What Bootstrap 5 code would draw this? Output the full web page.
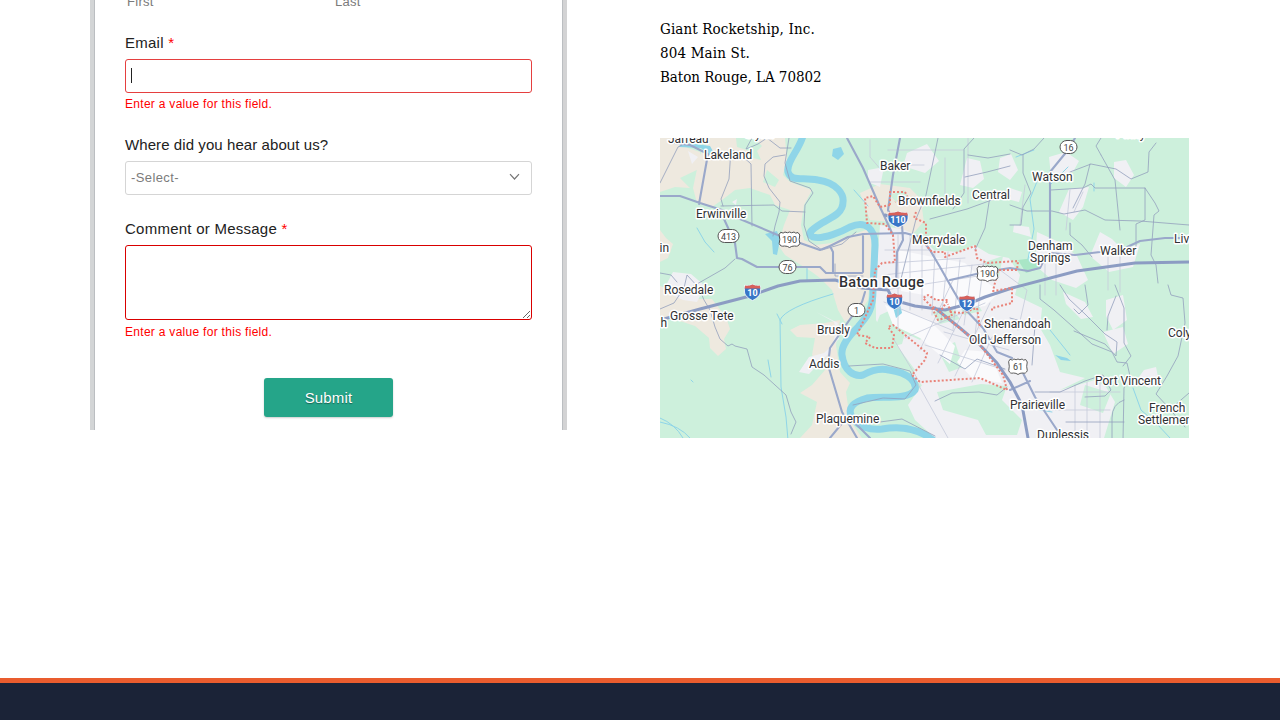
<!DOCTYPE html>
<html lang="en">
<head>
<meta charset="utf-8">
<meta name="viewport" content="width=device-width, initial-scale=1">
<title>Contact Giant Rocketship</title>
<link href="https://cdn.jsdelivr.net/npm/bootstrap@5.3.0/dist/css/bootstrap.min.css" rel="stylesheet">
<style>
body{font-family:"Liberation Sans",Arial,sans-serif;color:#222}
.page-main{height:678px}
.form-frame{width:477px;height:430px;margin-left:90px;padding:0 30px;border:solid #d3d4d6;border-width:0 5px;border-image:linear-gradient(90deg,#d3d5d6 0,#d3d5d6 4px,#bbbec1 4px,#bbbec1 5px,#bbbec1 472px,#bbbec1 473px,#d3d3d4 473px) 0 5}
.name-hints{height:18px;margin-top:-7px;margin-bottom:22px;font-size:13px;line-height:18px;letter-spacing:.3px;color:#7b7b7b}
.name-hints span{flex:0 0 208px;padding-left:2px}
.field-title{display:block;font-size:15px;line-height:20px;letter-spacing:.25px;margin-bottom:6px}
.field-title.long-title{letter-spacing:.08px}
.field-title i{color:#f00;font-style:normal}
.form-frame .form-control,.form-frame .form-select{height:34px;border-radius:3px;font-size:13px;letter-spacing:.4px;padding:0 5px;color:#7b7b7b;box-shadow:none}
.form-frame .form-select{border-color:#d5d5d5;background-image:none;margin-bottom:24px}
.form-frame .email-box{border-color:#e53f3f}
.form-frame textarea.form-control{height:75px;border-color:#d90000}
.caret-bar{width:1px;height:15px;background:#222;left:6px;top:9px}
.select-arrow{right:12px;top:12px}
.error-note{font-size:12px;line-height:18px;letter-spacing:.29px;color:#f00;padding-top:2px;margin-bottom:22px}
.error-note.last-note{padding-top:3px;margin-bottom:37px}
.send-btn{width:129px;height:39px;background:#25a589;color:#fff;border:0;border-radius:3px;font-size:15px;letter-spacing:.15px;padding:2px 0 0;text-shadow:0 1px 1px #0006;box-shadow:0 1px 2px #0003}
.info-col{width:529px;margin-left:93px;padding-top:17px}
.street{font-family:"Roboto Slab","DejaVu Serif Condensed","DejaVu Serif",serif;font-size:15px;line-height:24px;color:#000;margin-bottom:49px;white-space:nowrap}
.street .firm{letter-spacing:.13px}
.street .house{letter-spacing:.15px}
.street .locality{letter-spacing:-.05px}
.site-foot{height:42px;background:#1b2337;border-top:5px solid #e95c2e}
.town{font-family:Roboto,sans-serif;font-size:12px;fill:#303134;stroke:#fff;stroke-width:3px;stroke-linejoin:round;paint-order:stroke}
.road-no{font-family:Roboto,sans-serif;font-size:9px;fill:#444;text-anchor:middle}
.interstate-no{font-family:Roboto,sans-serif;font-size:9px;font-weight:700;fill:#fff;text-anchor:middle}
</style>
</head>
<body class="bg-white overflow-hidden">
<main class="page-main d-flex align-items-start overflow-hidden">
<form class="form-frame flex-shrink-0 overflow-hidden" novalidate>
  <div class="name-hints d-flex"><span>First</span><span>Last</span></div>
  <label class="field-title" for="email">Email <i>*</i></label>
  <div class="position-relative"><input id="email" class="form-control email-box"><span class="caret-bar position-absolute"></span></div>
  <div class="error-note">Enter a value for this field.</div>
  <label class="field-title long-title" for="source">Where did you hear about us?</label>
  <div class="position-relative"><select id="source" class="form-select"><option>-Select-</option></select>
    <svg class="select-arrow position-absolute" width="11" height="8" fill="none" stroke="#777" stroke-width="1.2"><path d="M1 1.2 5.5 6 10 1.2"/></svg></div>
  <label class="field-title" for="comment">Comment or Message <i>*</i></label>
  <textarea id="comment" class="form-control d-block"></textarea>
  <div class="error-note last-note">Enter a value for this field.</div>
  <div class="text-center"><button type="button" class="btn send-btn">Submit</button></div>
</form>
<section class="info-col flex-shrink-0">
  <address class="street"><span class="d-block firm">Giant Rocketship, Inc.</span><span class="d-block house">804 Main St.</span><span class="d-block locality">Baton Rouge, LA 70802</span></address>
  <svg class="d-block" width="529" height="300" viewBox="660 138 529 300" fill="none" stroke-linejoin="round" stroke-linecap="round">
    <defs>
      <g id="shield"><path d="M-7.500-6.500Q-4-5.500 0-7.500Q4-5.500 7.500-6.500Q8.500-3 8 0C7.500 4 4 6.500 0 8.500C-4 6.500-7.500 4-8 0Q-8.500-3-7.500-6.500Z" fill="#3876c7" stroke="#fff" stroke-width=".8"/><path d="M-7.300-6.500Q-4-5.500 0-7.500Q4-5.500 7.300-6.500L7.900-3.500H-7.900Z" fill="#d8605a"/></g>
      <g id="usroute"><path d="M-8.500-7Q-6-5.500-4.500-7.500Q-2-6 0-7.500Q2-6 4.500-7.500Q6-5.500 8.500-7L10.300-4.500Q9 0 10.300 4Q9 7.500 5 6.500Q2 6.500 0 8Q-2 6.500-5 6.500Q-9 7.500-10.300 4Q-9 0-10.300-4.500Z" fill="#fff" stroke="#555" stroke-width="1"/></g>
    </defs>
    <path fill="#cdf0dc" d="M660 138h529v300H660z"/>
    <!-- farmland -->
    <g fill="#eee9df">
      <path d="M660 138L675 138L688 148L700 152L701 168L680 178L690 188L675 187L660 192Z"/>
      <path d="M700 155L710 138L785 138L787 160L783 175L790 182L812 190L804 205L801 225L804 240L815 245L832 243L845 237L872 228L871 265L868 300L860 312L845 322L838 310L832 290L820 278L812 272L785 255L778 245L784 225L790 210L775 205L770 195L750 188L735 190L722 200L712 207L697 203L693 188Z"/>
      <path d="M790 330L800 325L825 323L840 320L836 345L840 372L850 383L846 392L850 420L862 438L800 438L812 425L817 402L800 393L812 385L825 370L812 355L815 338L797 337Z"/>
      <path d="M660 230l6 8 7 6-5 14-8 4zM660 286l14 5 20 8 18 0 14 18 4 12-6 10 2 10-8 7-8-8-1-10-14-12-18-6-17-4z"/>
      <path d="M860 193L880 184L910 188L922 200L925 220L912 235L900 232L890 222L870 220Z"/>
      <path d="M884 233l14-3 8 58-17 5zM935 255l15-2 4 14-14 3zM1020 382l18 5 14 12-18 7z"/>
    </g>
    <path fill="#cdf0dc" d="M736 138h18l8 8-5 5 4 9-8-2-6-8-10-3zM767 170l12 10-4 7-12-5z"/>
    <!-- built-up land -->
    <g fill="#f0f0f4">
      <path d="M880 225L905 230L922 238L934 250L958 252L974 245L989 254L1009 258L1020 275L1015 295L1042 308L1040 328L1050 345L1060 372L1085 378L1060 390L1095 380L1106 387L1115 402L1104 438H935L915 420L908 405L922 385L908 375L890 345L876 320L876 280Z"/>
      <path d="M907 153l20-9 12 17-14 12-22-7zM868 170l16-3-4 20-12-5zM960 185l7-27 13 3 4 18-11 9zM1000 158l11-4 7 16-8 10-12-8zM1049 157l17-5 13 9-6 11-22 4zM1069 189l20-2-6 20-10 13-14-8zM1037 232l22 10 18 14 11 24-12 8-24-8-17-15zM1100 232l12 7 10 10 18-5-7 23-24 5-19-16zM1114 162l12-2 8 15-8 12-12-9zM1010 188l12 4-3 10-12-3zM1014 225l15 2 2 10-18-5zM1063 292l22 10 8 15-12 2-15-15zM1106 300l17-5 4 25-14 10-7-14zM1103 332l20-5 5 17-15 10zM1144 370l12-3 3 15-10 6-13-7z"/>
      <path d="M673 272l18 2 14 12-8 16-14-2-20-9zM816 312l18 10 5 17-15 14-15 4-10 15 10 2 22-23 7-28zM688 151l10 6-6 7zM732 202l5-3-1 6z"/>
    </g>
    <!-- parks -->
    <g fill="#cdf0dc">
      <path d="M890 195l14-5 5 8-13 4zM922 208l18 8 20 20-20 12-14-10zM880 315l11-5 15 20-4 14-20 5-10-14zM850 350l18-15 25 5 22 30-5 10-30-15-30 5zM895 320l30 14-5 6-20-9zM932 312l20-3 8 10-20 5zM956 298l17-2 9 15-18 4zM938 350l17-8 8 25-14 5zM985 262l18-6-4 20-15 2zM850 405l28-7 30 3-3 22-48-2z"/>
      <path d="M937 392l44-8 26 2-5 14 20 20-5 15h-31l-8-15-35-10zM1085 385l26 8-8 20-23-8z"/>
    </g>
    <path d="M1018 260l16-2 7 10-15 5z" fill="#a9e6c6"/>
    <g fill="#fafafc"><path d="M898 250l30 6 37 7 15 14 20 15-15 14-30 4-25-14-29-5zM885 305l43 14 27 27-5 18-30-26-27-13zM965 350l25 2 12 31-30-5-15-16z"/></g>
    <!-- Mississippi River -->
    <path stroke="#8fd5e8" stroke-width="7" d="M803 136C798 152 786 162 788 172C791 182 802 177 818 180C838 183 844 195 843 202C843 214 830 218 822 223C811 230 806 234 813 237C823 240 843 231 850 227C866 220 875 229 875 245L873 290C873 312 866 317 858 327C846 339 841 347 842 355C844 371 854 377 863 375C872 370 880 368 889 370C910 373 917 383 915 390C908 400 883 396 867 398C853 402 848 408 851 415C857 428 871 430 882 429C904 425 920 430 933 440"/>
    <path fill="#8fd5e8" d="M833 149l8-2 3 7-6 6-6-4zM681 143l14 1 15 2 4 7-5 2-8-7-22-1zM765 234l12-3 3 9-3 15-4-1-1-13zM1055 355l12 3 4 3-10-1zM892 303l7-3 3 13-6 5z"/>
    <g stroke="#8fd5e8" stroke-width="1"><path d="M660 418q15 6 23 20M660 422q20 4 30 16M788 440l-2-23-5-30-1-67q5-12 53-26M782 324l-5-10M697 228l8 14 9 10M807 268v12M691 380l2 2M768 360l3 17M854 190l14 16M1040 174l-10 25 4 30-6 30M1050 185l18-18M1133 388l8 22 16 14 13 14M1040 410l12 2M1133 386l14-9M1050 330l20 25M1094 183v8M1016 157l18-7"/></g>
    <!-- local roads -->
    <g stroke="#c5cada" stroke-width=".8">
      <path d="M885 250h45M890 263l75-5M883 275l110-12M885 290l100-15M898 235v95M910 235v75M922 245v65M935 250l-3 65M948 252l-7 70M960 260l-7 70M972 265l-8 60M984 260l-9 75M884 302l70 29M905 338l80-35M920 350l33-70M938 363l32-65M955 376l35-73M972 382l20-45M925 345l80 25M944 332l65 18M1000 270l27 20-9 40M1045 260v35M1056 255v40M1108 246v44M1120 245v47M1075 385v53M1087 382v56M1100 378v60M1050 392h70M1045 410h65M918 384l30 54M893 338l27 45"/>
      <path d="M888 150h75M870 182h50M885 165h39M945 158v42M968 138v65M870 140v17l12 14M1025 185l-5 40M1070 190l-4 40M1083 192l-9 20"/>
    </g>
    <!-- county roads -->
    <g stroke="#939fbd" stroke-width=".8">
      <path d="M660 183l18-36 18-9M731 149l-2 30-8 20 2 7M731 150l8 3 12 11 1 62M752 138l-6 11 12-5 9-6M767 138l13 10 11 0M789 138l-4 25 5 18 20 7 3 5-8 12-1 20 5 16 13 9 20-6 14-12M785 155l-12 2-8 7-1 12 5 12 11 14-1 10-4 14-2 10M721 206l53-1 8 6 23 1"/>
      <path d="M938 138l-12 57-10 24-15 60M974 138l-10 11v44l-11 16M930 219l37-10 33-12 10-1M968 155l20 3 22-4M965 177l22-5 23-6M990 196l-5 32-10 22M1010 150l12 5 12-6 10-11M1023 155l0 18 8 20-8 14-2 18-11 0M1010 205l17 6 25 0 12 3 21-4 20 10 35 1 49 4M1070 172l21-8 25 5 15 10 17-7 1-20 7-9M1101 155l-5-9 5-8M1101 155l14 25 5 50M1051 190l32-2 8-4 4 4h50l10 15 4 8-5 4-3 40 5 10 2 18M1145 188v32l-9 4v25M1070 223l0 12 12 10 10 12M1090 164l-5 20-12 24"/>
      <path d="M660 309l14-6 10-15 3-13 12 13 5 12 6 10 5 17 5 12 8 7 4-2 3 2 12 3 5 18 12 8 22 20 5 17 5 10-5 12M660 273l11 2 6 7M690 288l35-20 10-9M1040 285v14l14 11 18 16 20 18 20 8 5 10 10 1 3 13-6 12-1 52M1060 285l9 14 16 15 20 20 12 8-1 14-11-12-31-13M1085 285l3 20-9 9-5-5M1115 285l9 23v35l7 13-8 10M1107 330l1-14 8-20M1168 285l3 10 12 3 2 25-7 33-11 20-11 18 12 13 17 20M1189 393l-15 13M1035 392h25l25-11 18-6 8 15-6 6-20 1M1010 318l25 7-3 40M1066 422h58M1112 438v-20q0-14 12-18"/>
      <path d="M849 366l34-2 27 7 6 14-11 14-22-1-30 7M850 420l30 2 22-3 33 17M940 355l25 14 12-10 28 10M935 401l17-8 27-1 18 3 10-8M863 276h-28v-12"/>
    </g>
    <!-- highways -->
    <g stroke="#9aa8ca" stroke-width="2.100">
      <path d="M660 196L680 196L700 203L722 210L740 219L780 236L800 243L820 250L830 246L848 237L863 234L905 233L920 237L930 250L940 267L953 290L963 307L983 328L997 352L1012 358M675 143L690 145L708 154L699 204M724 219L735 243L737 258L742 259L757 267L820 267L826 273L862 273M847 138L863 168L880 207L893 235M900 138L893 175L888 210L892 218L902 225L903 240L897 252L896 285M863 236V272M830 246L833 252V272M950 280L985 272L1010 268L1028 271L1040 268L1045 258M1075 138L1068 150L1050 172V243M1050 253L1075 255L1100 252L1125 248L1140 241L1165 238L1189 238M865 292L862 302L848 322L830 348L828 365L842 412L857 438M1023 373L1035 397L1057 430M830 438L848 416L870 438M1010 390L1030 381"/>
    </g>
    <g stroke="#8c9cc3" stroke-width="3"><path d="M660 320L700 309L750 296L778 286L800 281L835 280L862 288L888 290L893 300L915 306L945 310L968 304L985 297L1012 288L1077 271L1135 263L1189 262M885 215L900 220M935 308L960 328L980 345L997 363L1010 382L1022 405L1028 438"/></g>
    <!-- city limits -->
    <path stroke="#e98278" stroke-width="2" stroke-linecap="butt" stroke-dasharray="2 2" d="M890 205L880 207L873 196L865 198L867 223L885 224L893 235L895 262L882 263L875 270L873 300L857 335L870 337L865 343L875 348L892 348L894 335L888 327L893 325L927 353L925 360L912 375L920 382L980 378L1007 390L1003 375L980 345L940 312L930 305L923 298L928 295L936 300L948 300L940 312M890 205L890 192L905 192L908 198L895 202M916 212L914 218L926 223L926 245L932 252L945 252L945 257L975 246L977 258L987 263L1018 261L1017 270L998 270L993 291L1012 288V303L992 308V312M932 308L938 320L952 316L948 304M950 312L962 313L977 308L980 328"/>
    <!-- route markers -->
    <use href="#shield" x="752.500" y="292"/><use href="#shield" x="894.500" y="301"/><use href="#shield" x="967" y="303"/><use href="#shield" transform="translate(898 219) scale(1.250 1)"/>
    <g class="interstate-no"><text x="752.500" y="296">10</text><text x="894.500" y="305">10</text><text x="967" y="307">12</text><text x="898" y="223">110</text></g>
    <g fill="#fff" stroke="#555"><rect x="718" y="229.500" width="21" height="13" rx="6.500"/><rect x="779" y="260.500" width="17" height="13" rx="6.500"/><rect x="848" y="303.500" width="17" height="13" rx="6.500"/><rect x="1060" y="140.500" width="17" height="13" rx="6.500"/></g>
    <use href="#usroute" x="789.500" y="239.500"/><use href="#usroute" x="987.500" y="273.500"/><use href="#usroute" transform="translate(1018 366.500) scale(.9 1)"/>
    <g class="road-no"><text x="728.500" y="240">413</text><text x="787.500" y="271">76</text><text x="856.500" y="314">1</text><text x="1068.500" y="151">16</text><text x="789.500" y="243">190</text><text x="987.500" y="277">190</text><text x="1018" y="370">61</text></g>
    <!-- towns -->
    <g class="town">
      <text x="668" y="143">Jarreau</text><text x="744" y="138">Glynn</text><text x="704" y="159">Lakeland</text><text x="696" y="218">Erwinville</text><text x="659.500" y="252">in</text><text x="664" y="294">Rosedale</text><text x="670" y="320">Grosse Tete</text><text x="660.500" y="327">h</text><text x="880" y="170">Baker</text><text x="898" y="205">Brownfields</text><text x="912" y="244">Merrydale</text><text x="972" y="199">Central</text><text x="1032" y="181">Watson</text><text x="1116" y="138">Pinny</text><text x="1028" y="250">Denham</text><text x="1030" y="262">Springs</text><text x="1100" y="255">Walker</text><text x="1174" y="243">Livingston</text><text x="817" y="334">Brusly</text><text x="809" y="368">Addis</text><text x="816" y="423">Plaquemine</text><text x="984" y="328">Shenandoah</text><text x="969" y="344">Old Jefferson</text><text x="1168" y="337">Colyell</text><text x="1095" y="385">Port Vincent</text><text x="1010" y="409">Prairieville</text><text x="1037" y="439">Duplessis</text><text x="1149" y="412">French</text><text x="1138" y="424">Settlement</text>
      <text x="839" y="287" font-weight="500" style="font-size:14.500px" textLength="85">Baton Rouge</text>
    </g>
  </svg>
</section>
</main>
<footer class="site-foot"></footer>
<script src="https://cdn.jsdelivr.net/npm/bootstrap@5.3.0/dist/js/bootstrap.bundle.min.js"></script>
</body>
</html>
